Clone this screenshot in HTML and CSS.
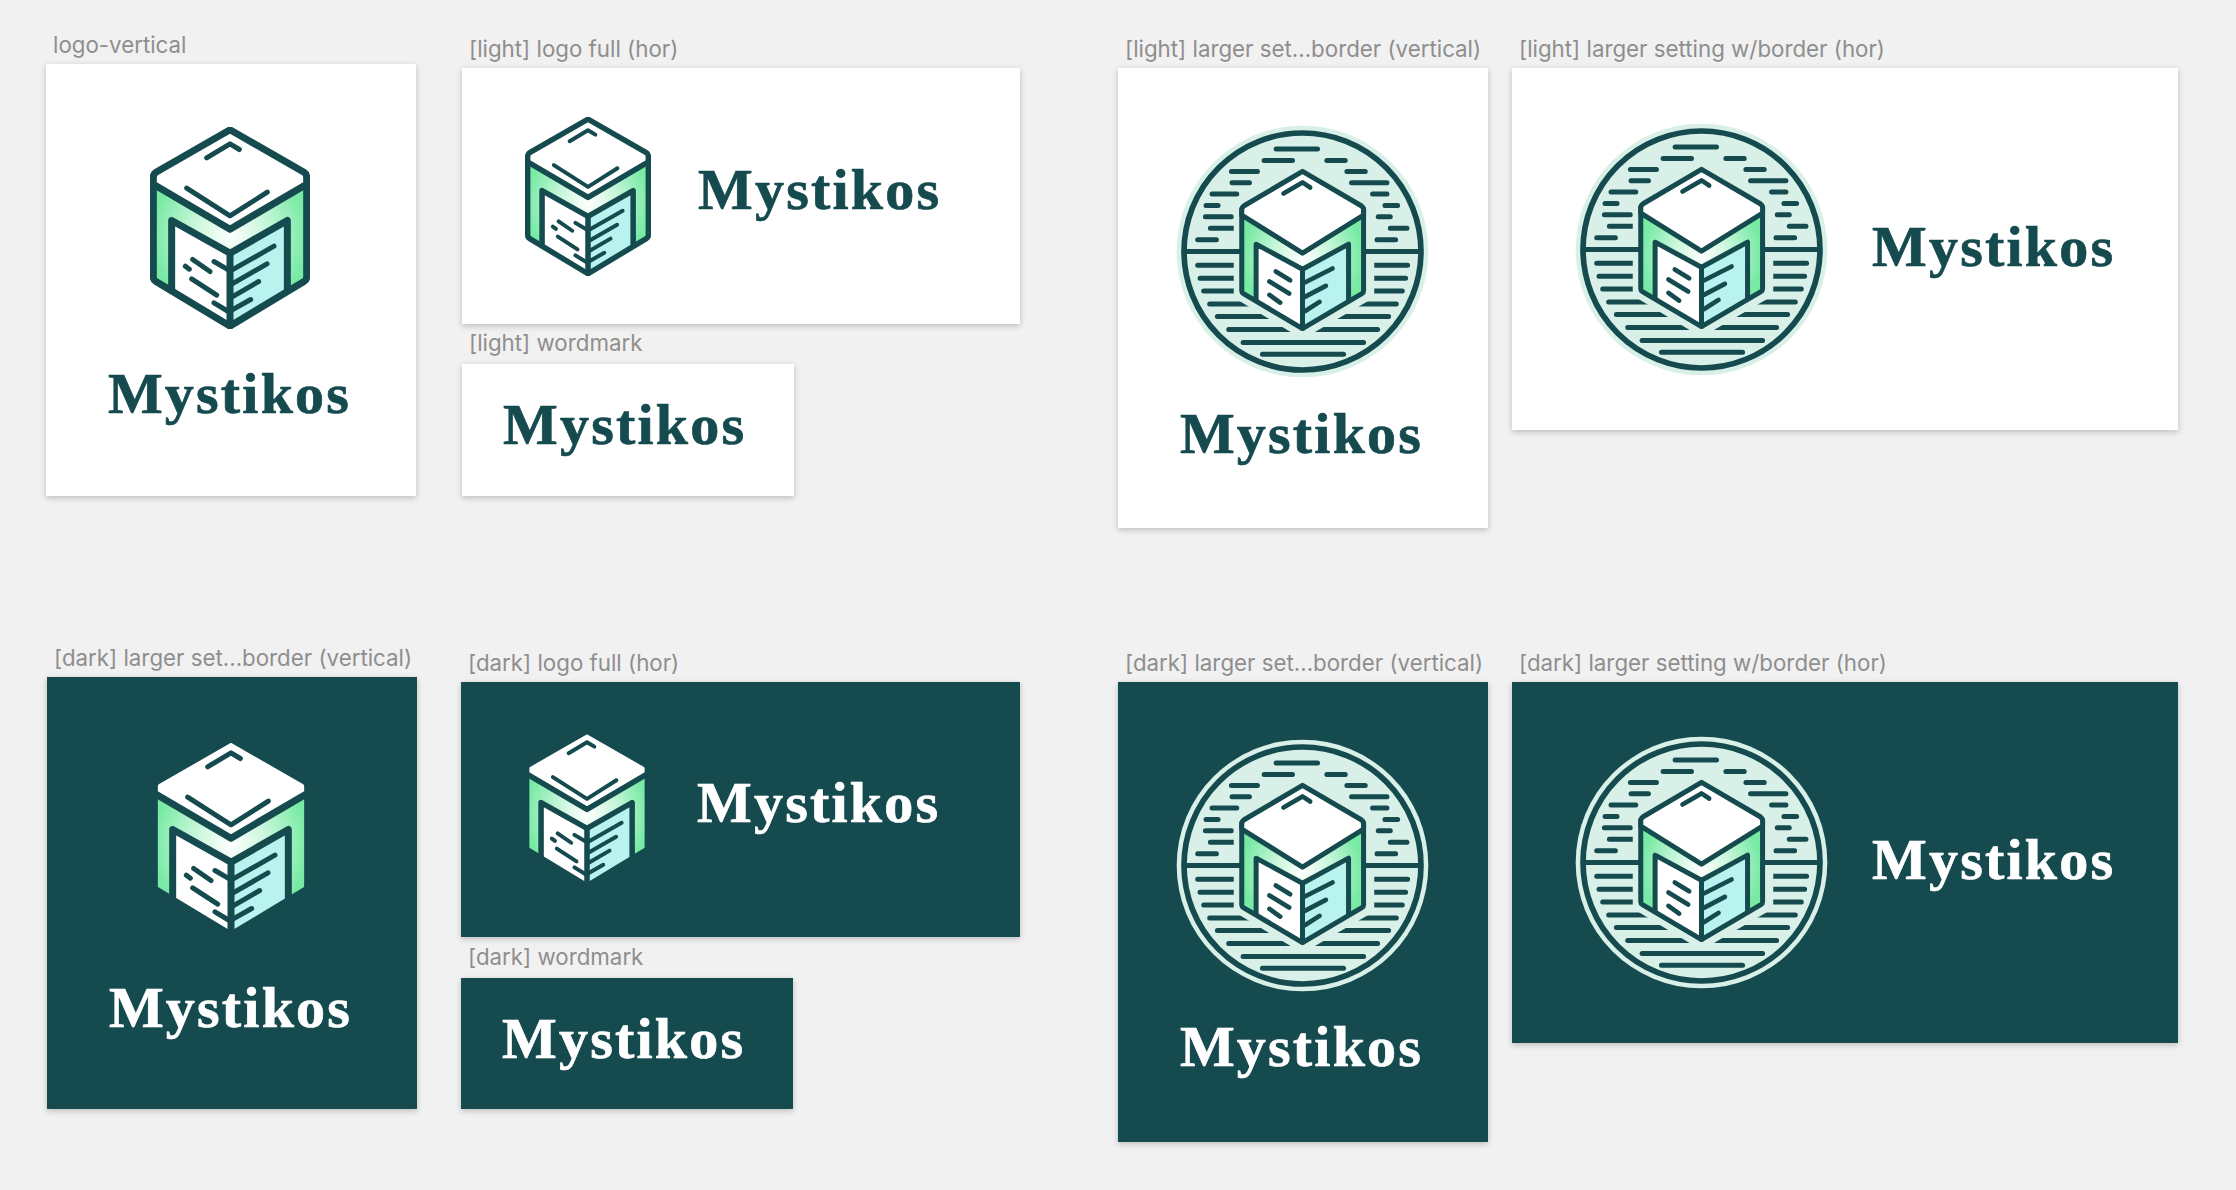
FILE: index.html
```html
<!DOCTYPE html>
<html lang="en">
<head>
    <meta charset="UTF-8">
    <title>Mystikos logo artboards</title>
    <link rel="stylesheet" href="styles.css">
</head>
<body>
    <!-- shared artwork -->
    <svg class="defs" xmlns="http://www.w3.org/2000/svg">
        <defs>
            <radialGradient id="cube-glow" gradientUnits="userSpaceOnUse" cx="300" cy="345" r="235">
                <stop offset="0" stop-color="#ffffff"/>
                <stop offset="0.5" stop-color="#c4f6d8"/>
                <stop offset="1" stop-color="#78eaa4"/>
            </radialGradient>
            <radialGradient id="badge-glow" gradientUnits="userSpaceOnUse" cx="607" cy="680" r="180">
                <stop offset="0" stop-color="#ffffff"/>
                <stop offset="0.5" stop-color="#c4f6d8"/>
                <stop offset="1" stop-color="#78eaa4"/>
            </radialGradient>
        </defs>

        <symbol id="cube" viewBox="60 20 480 605">
            <g fill="none" stroke="#154a4f" stroke-linecap="round" stroke-linejoin="round">
                <path fill="url(#cube-glow)" stroke="none" d="M70 190 L300 326 L530 190 V478 L300 617 L70 478 Z"/>
                <path fill="#fff" stroke="none" d="M125 300 L300 398 V617 L125 510 Z"/>
                <path fill="#b9f3f0" stroke="none" d="M300 398 L472 300 V510 L300 617 Z"/>
                <g stroke-width="15">
                    <path d="M252 423 L295 448"/>
                    <path d="M188 417 L240 453"/>
                    <path d="M166 437 L178 446"/>
                    <path d="M185 475 L260 524"/>
                    <path d="M252 547 L295 573"/>
                    <path d="M300 452 L432 377"/>
                    <path d="M300 494 L411 430"/>
                    <path d="M300 533 L386 483"/>
                    <path d="M300 572 L362 537"/>
                </g>
                <g stroke-width="21">
                    <path d="M125 505 V300 L300 398 L472 300 V505"/>
                    <path d="M300 398 V617"/>
                    <path d="M70 170 V470 Q70 478 78 483 L292 612 Q300 617 308 612 L522 483 Q530 478 530 470 V170"/>
                    <path fill="#fff" d="M300 28 L522 155 Q530 160 530 170 V191 L300 326 L70 191 V170 Q70 160 78 155 Z"/>
                </g>
                <g stroke-width="15">
                    <path d="M230 112 L300 70 L328 87"/>
                    <path d="M170 203 L300 286 L412 215"/>
                </g>
            </g>
        </symbol>

        <symbol id="badge" viewBox="207 262 800 800">
            <circle cx="607" cy="662" r="377" fill="#d8f0e8"/>
            <circle cx="607" cy="662" r="355" fill="none" stroke="#154a4f" stroke-width="17"/>
            <g fill="none" stroke="#154a4f" stroke-width="15" stroke-linecap="round" stroke-linejoin="round">
                <path d="M528 355 H652"/>
                <path d="M492 389 H577 M680 389 H735"/>
                <path d="M394 422 H472 M740 422 H795"/>
                <path d="M396 456 H448 M754 456 H860"/>
                <path d="M336 490 H410 M817 490 H860"/>
                <path d="M318 524 H354 M854 524 H892"/>
                <path d="M316 558 H394 M834 558 H870"/>
                <path d="M331 592 H440 M870 592 H920"/>
                <path d="M293 627 H349 M830 627 H886"/>
                <path d="M293 703 H440 M780 703 H922"/>
                <path d="M300 742 H440 M780 742 H916"/>
                <path d="M311 780 H440 M780 780 H906"/>
                <path d="M329 819 H480 M740 819 H888"/>
                <path d="M352 857 H520 M700 857 H865"/>
                <path d="M386 896 H600 M620 896 H832"/>
                <path d="M429 935 H790"/>
                <path d="M487 970 H730"/>
            </g>
            <polygon fill="#d8f0e8" points="607,395 822,520 822,800 607,925 401,800 401,520"/>
            <path d="M255 662 H960" stroke="#154a4f" stroke-width="15"/>
            <g fill="none" stroke="#154a4f" stroke-linecap="round" stroke-linejoin="round">
                <path fill="url(#badge-glow)" stroke="none" d="M425 553 L607 667 L790 553 V785 L607 893 L425 785 Z"/>
                <path fill="#fff" stroke="none" d="M468 640 L607 715 V893 L468 810 Z"/>
                <path fill="#b9f3f0" stroke="none" d="M607 715 L745 640 V810 L607 893 Z"/>
                <g stroke-width="14">
                    <path d="M527 722 L570 748"/>
                    <path d="M508 752 L567 788"/>
                    <path d="M508 792 L540 815"/>
                    <path d="M614 755 L697 713"/>
                    <path d="M614 798 L677 765"/>
                    <path d="M614 841 L658 813"/>
                </g>
                <g stroke-width="15">
                    <path d="M468 805 V640 L607 715 L745 640 V805"/>
                    <path d="M607 715 V893"/>
                    <path d="M425 535 V780 Q425 785 430 788 L602 890 Q607 893 612 890 L785 788 Q790 785 790 780 V535"/>
                    <path fill="#fff" d="M607 422 L783 525 Q790 530 790 538 V553 L607 667 L425 553 V538 Q425 530 432 525 Z"/>
                </g>
                <path stroke-width="14" d="M550 488 L607 455 L630 470"/>
            </g>
        </symbol>
    </svg>

    <!-- light row -->
    <section class="board board-light-logo">
        <div class="board-label">logo-vertical</div>
        <div class="frame frame-stack stack-cube">
            <svg class="cube"><use href="#cube"/></svg>
            <div class="wordmark">Mystikos</div>
        </div>
    </section>

    <section class="board board-light-hor">
        <div class="board-label">[light] logo full (hor)</div>
        <div class="frame frame-row row-cube">
            <svg class="cube cube-small"><use href="#cube"/></svg>
            <div class="wordmark">Mystikos</div>
        </div>
    </section>

    <section class="board board-light-word">
        <div class="board-label">[light] wordmark</div>
        <div class="frame frame-word">
            <div class="wordmark">Mystikos</div>
        </div>
    </section>

    <section class="board board-light-badge">
        <div class="board-label">[light] larger set...border (vertical)</div>
        <div class="frame frame-stack stack-badge">
            <svg class="badge"><use href="#badge"/></svg>
            <div class="wordmark">Mystikos</div>
        </div>
    </section>

    <section class="board board-light-badge-hor">
        <div class="board-label">[light] larger setting w/border (hor)</div>
        <div class="frame frame-row row-badge">
            <svg class="badge"><use href="#badge"/></svg>
            <div class="wordmark">Mystikos</div>
        </div>
    </section>

    <!-- dark row -->
    <section class="board board-dark-logo">
        <div class="board-label">[dark] larger set...border (vertical)</div>
        <div class="frame dark frame-stack stack-cube">
            <svg class="cube"><use href="#cube"/></svg>
            <div class="wordmark">Mystikos</div>
        </div>
    </section>

    <section class="board board-dark-hor">
        <div class="board-label">[dark] logo full (hor)</div>
        <div class="frame dark frame-row row-cube">
            <svg class="cube cube-small"><use href="#cube"/></svg>
            <div class="wordmark">Mystikos</div>
        </div>
    </section>

    <section class="board board-dark-word">
        <div class="board-label">[dark] wordmark</div>
        <div class="frame dark frame-word">
            <div class="wordmark">Mystikos</div>
        </div>
    </section>

    <section class="board board-dark-badge">
        <div class="board-label">[dark] larger set...border (vertical)</div>
        <div class="frame dark frame-stack stack-badge">
            <svg class="badge"><use href="#badge"/></svg>
            <div class="wordmark">Mystikos</div>
        </div>
    </section>

    <section class="board board-dark-badge-hor">
        <div class="board-label">[dark] larger setting w/border (hor)</div>
        <div class="frame dark frame-row row-badge">
            <svg class="badge"><use href="#badge"/></svg>
            <div class="wordmark">Mystikos</div>
        </div>
    </section>
</body>
</html>
```

FILE: styles.css
```css
body {
    margin: 0;
    width: 2236px;
    height: 1190px;
    overflow: hidden;
    position: relative;
    background-color: #f1f1f1;
    font-family: Inter, "Liberation Sans", sans-serif;
}
.defs {
    position: absolute;
    width: 0;
    height: 0;
}

/* artboards sit on a free canvas */
.board {
    position: absolute;
    display: flex;
    flex-direction: column;
}
.board-light-logo { left: 46px; top: 34px; }
.board-light-hor { left: 462px; top: 38px; }
.board-light-word { left: 462px; top: 332px; }
.board-light-badge { left: 1118px; top: 38px; }
.board-light-badge-hor { left: 1512px; top: 38px; }
.board-dark-logo { left: 47px; top: 647px; }
.board-dark-hor { left: 461px; top: 652px; }
.board-dark-word { left: 461px; top: 946px; }
.board-dark-badge { left: 1118px; top: 652px; }
.board-dark-badge-hor { left: 1512px; top: 652px; }

.board-label {
    height: 30px;
    padding-left: 7px;
    font-size: 22.3px;
    line-height: 22px;
    color: #8e8e8e;
    white-space: nowrap;
}
.board-light-word .board-label,
.board-dark-word .board-label {
    height: 32px;
}

.frame {
    display: flex;
    background-color: #fff;
    color: #154a4f;
    box-shadow: 0 2px 6px rgba(0, 0, 0, 0.22);
}
.frame.dark {
    background-color: #154a4f;
    color: #fff;
}

.wordmark {
    font-family: "Liberation Serif", serif;
    font-weight: 700;
    font-size: 58px;
    line-height: 60px;
    letter-spacing: 2.2px;
    white-space: nowrap;
    -webkit-text-stroke: 0.7px currentColor;
}

.cube {
    display: block;
    width: 160px;
    height: 202px;
    flex: none;
}
.cube-small {
    width: 126px;
    height: 159px;
}
.dark .cube-small {
    margin-bottom: 2px;
}
.badge {
    display: block;
    width: 267px;
    height: 267px;
    flex: none;
}

/* logo above wordmark */
.frame-stack {
    flex-direction: column;
    align-items: center;
    width: 370px;
}
.frame-stack .wordmark {
    margin-right: 3px;
}
.stack-cube {
    height: 369px;
    padding-top: 63px;
}
.stack-cube .cube {
    margin-right: 2px;
    margin-bottom: 35px;
}
.dark.stack-cube {
    height: 373px;
    padding-top: 59px;
}
.dark.stack-cube .cube {
    margin-bottom: 40px;
}
.stack-badge {
    height: 410px;
    padding-top: 50px;
}
.stack-badge .badge {
    margin-right: 2px;
    margin-bottom: 19px;
}
.dark.stack-badge .badge {
    margin-bottom: 18px;
}

/* logo beside wordmark */
.frame-row {
    align-items: center;
}
.row-cube {
    width: 495px;
    height: 256px;
    padding-left: 63px;
    gap: 47px;
}
.dark.row-cube {
    width: 496px;
    height: 255px;
}
.row-cube .wordmark {
    margin-bottom: 12px;
}
.dark.row-cube .wordmark {
    margin-bottom: 14px;
}
.row-badge {
    width: 610px;
    height: 362px;
    padding-left: 56px;
    gap: 37px;
}
.dark.row-badge {
    height: 361px;
}
.row-badge .wordmark {
    margin-bottom: 4px;
}
.dark.row-badge .wordmark {
    margin-bottom: 6px;
}

/* wordmark alone */
.frame-word {
    align-items: center;
    width: 291px;
    height: 132px;
    padding-left: 41px;
}
.dark.frame-word {
    height: 131px;
}
.frame-word .wordmark {
    margin-bottom: 10px;
}
```
